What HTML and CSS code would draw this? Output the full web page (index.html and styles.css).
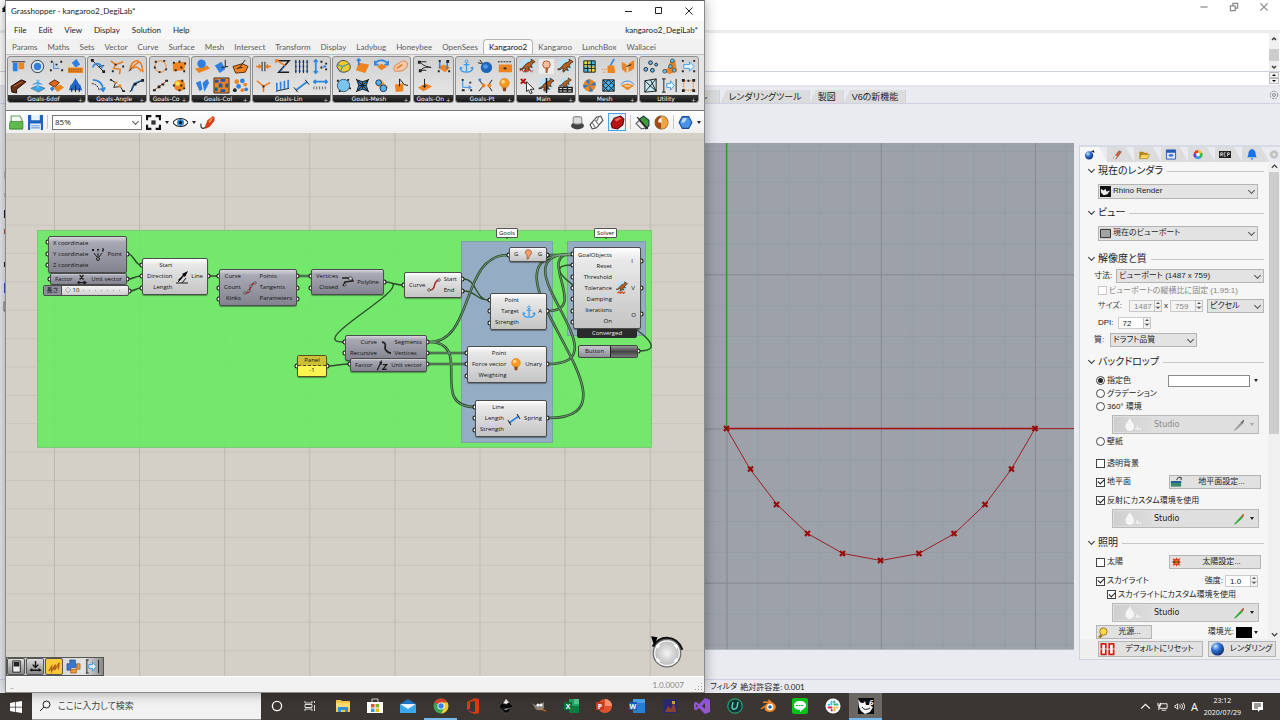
FILE: index.html
```
<!DOCTYPE html>
<html lang="ja">
<head>
  <meta charset="UTF-8" />
  <meta name="viewport" content="width=device-width, initial-scale=1.0" />
  <title>Grasshopper - kangaroo2_DegiLab*</title>
  <link rel="stylesheet" href="styles.css">
</head>
<body>

  <!-- shared shapes -->
  <svg class="defs" aria-hidden="true">
    <defs>
      <radialGradient id="ball" cx=".35" cy=".3" r=".8"><stop offset="0" stop-color="#cfe6ff"/><stop offset=".4" stop-color="#2f74d8"/><stop offset="1" stop-color="#0b1f5c"/></radialGradient>
      <radialGradient id="knob"><stop offset="0" stop-color="#f4f4f4"/><stop offset="1" stop-color="#b5b5b5"/></radialGradient>
      <pattern id="ghGrid" x="54" y="253" width="85.1" height="28.37" patternUnits="userSpaceOnUse"><path d="M0 .5H86" stroke="#c8c4bb" stroke-width="1"/><path d="M.5 0V29" stroke="#bdb9af" stroke-width="1"/></pattern>
      <pattern id="rhMinor" x="726.5" y="428.5" width="30.85" height="30.85" patternUnits="userSpaceOnUse"><path d="M0 .5H31M.5 0V31" stroke="#969ca4"/></pattern>
      <pattern id="rhMajor" x="726.5" y="428.5" width="154.25" height="154.25" patternUnits="userSpaceOnUse"><path d="M0 .5H155M.5 0V155" stroke="#858a93"/></pattern>
      <symbol id="roo" viewBox="0 0 18 18"><circle cx="9" cy="8" r="7.500" fill="#b9e2f6"/><path d="M1 11.500C4 12 5 8 8 6c2-1.500 4-1 5-3V1l1.500 1.500L17 4l-2.500 1.500L13 8l1 2-2-.5-2 .5 2 3-3-.5L7 15l-1-1 1-3c-2-1-3 2-6 1.500z" fill="#b55f20" stroke="#2e1a0c" stroke-width=".8"/></symbol>
      <symbol id="bulb" viewBox="0 0 12 16"><circle cx="6" cy="5.500" r="5" fill="#f79a1e" stroke="#c46a08" stroke-width=".5"/><circle cx="4.500" cy="4" r="2" fill="#ffd38a"/><path d="M4 10h4l-.5 4h-3z" fill="#8c4a1c"/></symbol>
      <symbol id="anchor" viewBox="0 0 16 16"><path d="M8 4v10M5 6h6M1.500 9c0 4 4 5 6.500 5s6.500-1 6.500-5M1 11l.7-2 2 1M15 11l-.7-2-2 1" fill="none" stroke="#3d9be6" stroke-width="1.300"/><circle cx="8" cy="2.600" r="1.500" fill="none" stroke="#3d9be6"/></symbol>
      <symbol id="drops" viewBox="0 0 20 14"><path d="M7 1c2 4 4 5 4 8a4 4 0 0 1-8 0c0-3 2-4 4-8z" fill="#f5f5f5"/><path d="M14 8l2 4h-4zM17 9l1 3h-2z" fill="#efefef"/></symbol>
      <symbol id="pen" viewBox="0 0 14 14"><path d="M2 12L9 4l2 2-8 7-2 .5z"/><path d="M9 4l3-3 1 1-2 4z" fill="#b5562a"/></symbol>
    </defs>
  </svg>

  <main class="desktop">

    <!-- Rhino, behind -->
    <section class="rhino">
      <header class="rh-title">
        <svg class="rh-mark" viewBox="0 0 6 12"><path d="M6 2v9H2l1-2-1-1 2-2z" fill="#111"/></svg>
        <button aria-label="Minimize"><svg viewBox="0 0 10 10"><path d="M2 5h6"/></svg></button>
        <button aria-label="Restore"><svg viewBox="0 0 10 10"><path d="M2 4h4v4H2zM4 4V2h4v4H6"/></svg></button>
        <button aria-label="Close"><svg viewBox="0 0 10 10"><path d="M2 2l6 6M8 2L2 8"/></svg></button>
      </header>
      <div class="rh-history">
        <div class="mini-scroll"><svg viewBox="0 0 10 38"><path d="M3 7l2-2 2 2M3 33l2 2 2-2" class="ln"/><path d="M0 16h10v12H0z" fill="#cdcdcd"/></svg></div>
      </div>
      <div class="rh-command">
        <input type="text" aria-label="Command">
        <svg viewBox="0 0 10 13"><path d="M.5.5h9v5h-9zM.5 6.500h9v5h-9z" fill="#f4f4f4" stroke="#bbb"/><path d="M3 4l2-2 2 2zM3 8l2 2 2-2z"/></svg>
      </div>
      <nav class="rh-tabs">
        <button class="cut">ル</button>
        <button>レンダリングツール</button>
        <button>製図</button>
        <button>V6の新機能</button>
        <svg class="gear" viewBox="0 0 10 10"><circle cx="5" cy="5" r="3.800" fill="none" stroke="#888" stroke-dasharray="2 1"/><circle cx="5" cy="5" r="1.500" fill="none" stroke="#888"/></svg>
      </nav>
      <div class="rh-tools"></div>

      <div class="rh-body">
        <svg class="rh-side" viewBox="0 0 6 180"><path d="M5 28v8M5 50v4" stroke="#999"/><path d="M4 67h2v8H4zM4 119h2v5H4z" fill="#223"/><path d="M4 86h2v5H4z" fill="#c05a20"/><path d="M4 140h2v10H4z" fill="#2a5ac0"/><path d="M6 159H4v9h2" fill="none" stroke="#666"/></svg>
        <div class="viewport">
          <svg width="100%" height="100%">
            <g transform="translate(-6 -143)">
              <rect y="143" width="1080" height="510" fill="url(#rhMinor)"/>
              <rect y="143" width="1080" height="510" fill="url(#rhMajor)"/>
              <path d="M726.500 143V428" stroke="#2c9a2f" stroke-width="1.300"/>
              <path d="M1035 428.500h40" stroke="#9c2a2e"/>
              <path d="M726 428.500H1035" stroke="#a80d10" stroke-width="1.400"/>
              <path d="M726.500 428.500L750 469l27 35.500 30.500 29 35.500 20 38 7 38-7 35.500-20L985 504.500 1011.500 469l23.500-40.500" fill="none" stroke="#9c1f22"/>
              <path class="knots" d="M724 426l5 5m0-5l-5 5M748 466.500l5 5m0-5l-5 5M774 502l5 5m0-5l-5 5M805 531l5 5m0-5l-5 5M840 551l5 5m0-5l-5 5M878 558l5 5m0-5l-5 5M916.500 551l5 5m0-5l-5 5M951.500 531l5 5m0-5l-5 5M982.500 502l5 5m0-5l-5 5M1009 466.500l5 5m0-5l-5 5M1032.500 426l5 5m0-5l-5 5"/>
            </g>
          </svg>
        </div>

        <aside class="panel">
          <nav class="panel-tabs">
            <button class="on" aria-label="レンダリング"><svg viewBox="0 0 12 12"><circle cx="5" cy="7" r="4.500" fill="url(#ball)"/><path d="M7 3l3-2 1 3z" fill="#222"/></svg></button>
            <button aria-label="マテリアル"><svg viewBox="0 0 12 12"><path d="M2 10l6-8 3 1-6 8z" fill="#d9542b" stroke="#777" stroke-width=".7"/><path d="M2 10l2-3 2 1-2 3z" fill="#eee"/></svg></button>
            <button aria-label="ライブラリ"><svg viewBox="0 0 12 12"><path d="M1 3h4l1 1h4v2H4l-2 4H1z" fill="#b98210"/><path d="M3 6h9l-2 4.500H1z" fill="#ffd452" stroke="#7a5a10" stroke-width=".5"/></svg></button>
            <button aria-label="プロパティ"><svg viewBox="0 0 12 12"><path d="M1 1h10v10H1z" fill="#dfe8f8" stroke="#2457b8"/><path d="M1 1h10v3H1z" fill="#2457b8"/><path d="M3 7c2-2 4-2 6 0-2 2-4 2-6 0z" fill="#3a74d8"/></svg></button>
            <button aria-label="色"><svg viewBox="0 0 12 12"><path d="M6 6V1a5 5 0 0 1 4.500 3z" fill="#f2c21a"/><path d="M6 6l4.500-2A5 5 0 0 1 9 10z" fill="#36b548"/><path d="M6 6l3 4a5 5 0 0 1-6 0z" fill="#2aa6e8"/><path d="M6 6l-3 4a5 5 0 0 1-1.500-6z" fill="#6a3fd0"/><path d="M6 6L1.500 4A5 5 0 0 1 6 1z" fill="#e5352b"/><circle cx="6" cy="6" r="2" fill="#fff"/></svg></button>
            <button aria-label="RCP"><svg viewBox="0 0 14 12"><path d="M0 2h14v8H0z" fill="#222"/><path d="M2 8V4h2v2H2m2 2L3 6M8 4H6v4h2M10 8V4h2v2h-2" fill="none" stroke="#fff" stroke-width=".8"/></svg></button>
            <button aria-label="通知"><svg viewBox="0 0 12 12"><path d="M6 0c3 1 4 3 4 6l1 3H1l1-3c0-3 1-5 4-6z" fill="#1672e8"/><path d="M4.500 10h3L6 12z" fill="#1672e8"/></svg></button>
            <svg class="gear" viewBox="0 0 12 12"><circle cx="6" cy="6" r="4.500" fill="#c4c4c4" stroke="#b8b8b8" stroke-dasharray="2 1"/><circle cx="6" cy="6" r="1.600" fill="#eee"/></svg>
          </nav>

          <div class="panel-scroll">
            <form class="props">
              <h3>現在のレンダラ</h3>
              <div class="row in1">
                <span class="pick wide"><svg viewBox="0 0 12 12"><path d="M0 0h12v12H0z" fill="#111"/><path d="M1 3l3 2 2-2 1 3 4-1-3 4-4 1-3-3z" fill="#eee"/></svg><select class="icon-pad" aria-label="レンダラ"><option>Rhino Render</option></select></span>
              </div>
              <h3 class="up">ビュー</h3>
              <div class="row in1">
                <span class="pick wide"><svg viewBox="0 0 12 12"><path d="M.5 1.500h11v9H.5z" fill="#a3a3a3" stroke="#222"/></svg><select class="icon-pad" aria-label="ビュー"><option>現在のビューポート</option></select></span>
              </div>
              <h3 class="up2">解像度と質</h3>
              <div class="row in0"><label for="dim">寸法:</label><span class="pick grow"><select id="dim"><option>ビューポート (1487 x 759)</option></select></span></div>
              <div class="row in1 short"><input type="checkbox" id="lock" disabled><label for="lock" class="dim">ビューポートの縦横比に固定 (1.95:1)</label></div>
              <div class="row in1 gap"><label for="w" class="dim2">サイズ:</label><input id="w" class="num off" value="1487" disabled><i class="spin"></i><span>x</span><input class="num off" aria-label="高さ" value="759" disabled><i class="spin"></i><span class="pick grow"><select aria-label="単位"><option>ピクセル</option></select></span></div>
              <div class="row in1 gap"><label for="dpi">DPI:</label><input id="dpi" class="num dpi" value="72"><i class="spin"></i></div>
              <div class="row in0 gap"><label for="q">質:</label><span class="pick mid"><select id="q"><option>ドラフト品質</option></select></span></div>

              <h3 class="up">バックドロップ</h3>
              <div class="row short"><input type="radio" name="bg" id="b1" checked><label for="b1">指定色</label><button type="button" class="swatch" aria-label="色"></button><i class="tri"></i></div>
              <div class="row short"><input type="radio" name="bg" id="b2"><label for="b2">グラデーション</label></div>
              <div class="row short"><input type="radio" name="bg" id="b3"><label for="b3">360° 環境</label></div>
              <button type="button" class="studio" disabled><svg class="dr"><use href="#drops"/></svg>Studio<svg class="pn"><use href="#pen"/></svg><i class="tri"></i></button>
              <div class="row short gap"><input type="radio" name="bg" id="b4"><label for="b4">壁紙</label></div>
              <div class="row short far"><input type="checkbox" id="c1"><label for="c1">透明背景</label></div>
              <div class="row mid-row"><input type="checkbox" id="c2" checked><label for="c2">地平面</label><button type="button" class="set"><svg viewBox="0 0 14 12"><path d="M1 5h11v6H1z" fill="#3d8a6a"/><path d="M1 5h11v2H1z" fill="#1f5fa0"/><path d="M7 4l2-3h3v3" fill="none" stroke="#222"/></svg><span>地平面設定...</span></button></div>
              <div class="row short"><input type="checkbox" id="c3" checked><label for="c3">反射にカスタム環境を使用</label></div>
              <button type="button" class="studio"><svg class="dr"><use href="#drops"/></svg>Studio<svg class="pn"><use href="#pen"/></svg><i class="tri"></i></button>

              <h3 class="up3">照明</h3>
              <div class="row mid-row flush"><input type="checkbox" id="c4"><label for="c4">太陽</label><button type="button" class="set"><svg viewBox="0 0 14 12"><path d="M7 1l1 2 3-1-1 3 2 1-2 1 1 3-3-1-1 2-1-2-3 1 1-3-2-1 2-1-1-3 3 1z" fill="#d93a16"/><circle cx="7" cy="6" r="2" fill="#f4a020"/><path d="M3 6h7" stroke="#222"/></svg><span>太陽設定...</span></button></div>
              <div class="row mid-row tight"><input type="checkbox" id="c5" checked><label for="c5">スカイライト</label><label for="st" class="push">強度:</label><input id="st" class="num" value="1.0"><i class="spin wide-end"></i></div>
              <div class="row short in2"><input type="checkbox" id="c6" checked><label for="c6">スカイライトにカスタム環境を使用</label></div>
              <button type="button" class="studio"><svg class="dr"><use href="#drops"/></svg>Studio<svg class="pn"><use href="#pen"/></svg><i class="tri"></i></button>
              <div class="row mid-row flush"><button type="button" class="light"><svg viewBox="0 0 12 12"><circle cx="7" cy="5" r="4" fill="#ffd94a" stroke="#9a7210"/><path d="M1 11l3-3 2 2-2 2z" fill="#9a7210"/></svg><span>光源...</span></button><span class="push">環境光:</span><button type="button" class="black" aria-label="環境光"></button><i class="tri"></i></div>
            </form>
            <div class="scrollbar"><svg viewBox="0 0 10 10"><path d="M2 6l3-3 3 3" class="ln"/></svg><i></i><svg viewBox="0 0 10 10"><path d="M2 4l3 3 3-3" class="ln"/></svg></div>
          </div>

          <footer class="panel-foot">
            <button class="reset"><svg viewBox="0 0 18 16"><path d="M2 2h5v12H2zM11 2h5v12h-5z" fill="#fff" stroke="#d81e12" stroke-width="2"/><path d="M0 8h9M9 8h9" stroke="#e1e1e1"/></svg><span>デフォルトにリセット</span></button>
            <button class="render"><svg viewBox="0 0 16 16"><circle cx="8" cy="8" r="7.500" fill="url(#ball)"/></svg><span>レンダリング</span></button>
          </footer>
        </aside>
      </div>

      <div class="rh-gap"></div>
      <footer class="rh-status"><span>フィルタ</span><span>絶対許容差: 0.001</span></footer>
    </section>

    <!-- Grasshopper window -->
    <section class="gh">
      <header class="gh-title">
        <span>Grasshopper - kangaroo2_DegiLab*</span>
        <button aria-label="Minimize"><svg viewBox="0 0 10 10"><path d="M1 5.500h7"/></svg></button>
        <button aria-label="Maximize"><svg viewBox="0 0 10 10"><path d="M1.500 1.500h6v6h-6z"/></svg></button>
        <button aria-label="Close"><svg viewBox="0 0 10 10"><path d="M1.500 1.500l7 7M8.500 1.500l-7 7"/></svg></button>
      </header>
      <nav class="gh-menu">
        <a href="#">File</a><a href="#">Edit</a><a href="#">View</a><a href="#">Display</a><a href="#">Solution</a><a href="#">Help</a>
        <span>kangaroo2_DegiLab*</span>
      </nav>
      <nav class="gh-tabs">
        <button>Params</button><button>Maths</button><button>Sets</button><button>Vector</button><button>Curve</button><button>Surface</button><button>Mesh</button><button>Intersect</button><button>Transform</button><button>Display</button><button>Ladybug</button><button>Honeybee</button><button>OpenSees</button><button class="on">Kangaroo2</button><button>Kangaroo</button><button>LunchBox</button><button>Wallacei</button>
      </nav>

      <div class="ribbon">
        <div class="grp c4"><div class="icons">
          <svg viewBox="0 0 18 18"><path class="k" d="M2 4h14"/><path class="b" d="M3 5h5v9H3z"/><path class="o" d="M9 5h6v7H9z"/></svg>
          <svg viewBox="0 0 18 18"><circle cx="9" cy="9" r="6.500" fill="#dfe9f5" stroke="#234"/><circle class="b" cx="9" cy="9" r="4"/></svg>
          <svg viewBox="0 0 18 18"><path class="d" d="M3 3h2v2H3zM2 12h2v2H2zM13 3h2v2h-2zM14 12h2v2h-2zM8 6h2v2H8z"/><path class="bs" d="M6 5v6h6"/></svg>
          <svg viewBox="0 0 18 18"><path class="b" d="M5 5l5-4 4 6-5 3z"/><path class="o" d="M1 10h16v6H1z"/><path d="M2 12h14M2 14h14" stroke="#8a4a12" stroke-dasharray="1 1"/></svg>
          <svg viewBox="0 0 18 18"><path d="M1 10l11-7 5 2-10 8v4l-5-1z" fill="#6b2f12" stroke="#1d0d05"/><path d="M4 10l9-5" stroke="#c06a38"/></svg>
          <svg viewBox="0 0 18 18"><path d="M2 12l7-3 8 3-7 4z" fill="#3fa6e8" stroke="#246" stroke-width=".5"/><path d="M8 3h3v8H8z" fill="#6cc3f2"/><path class="bs" d="M4 8l5-2 5 2"/></svg>
          <svg viewBox="0 0 18 18"><path d="M1 7l6-4 5 3-5 5z" fill="#d9651a" stroke="#5b2a08"/><path class="o" d="M6 11l7-3 4 3-7 5z"/><path class="b" d="M2 12l3-2 2 3-3 2z"/></svg>
          <svg viewBox="0 0 18 18"><path d="M9 1l4 7H5zM4 8h10l2 6H2z" fill="#1f66c8"/><path class="k" d="M5 16v-4M9 16V9M13 16v-4"/></svg>
        </div><b>Goals-6dof</b></div>
        <div class="grp c3"><div class="icons">
          <svg viewBox="0 0 18 18"><path class="k" d="M2 2l7 7 6 6M9 9l6-1"/><path class="bs2" d="M3 10c2-6 8-5 10 1"/><path class="d" d="M1 1h3v3H1zM13 13h3v3h-3z"/></svg>
          <svg viewBox="0 0 18 18"><path class="os2" d="M2 3l5 4 8-3M7 7l-2 4 7 1-1 5"/><path class="d" d="M6 6h2v2H6zM14 8h2v2h-2zM3 13h2v2H3z"/></svg>
          <svg viewBox="0 0 18 18"><path class="os2" d="M2 13C3 5 8 1 12 4s2 6 4 11M2 13c3-5 7-7 10-9M5 11c4-3 6-1 9 3"/><path class="k" d="M1 14l3-3"/></svg>
          <svg viewBox="0 0 18 18"><path class="bs2" d="M3 3c6 0 10 4 11 10M11 12l3 3 2-4"/><path class="k" d="M2 7c4 0 7 3 8 8" stroke-dasharray="2 1"/></svg>
          <svg viewBox="0 0 18 18"><path class="k" d="M2 3l5 3-2 5 7-1 3 5"/><path class="o" d="M6 5h3v2H6zM10 8h3v3h-3z"/><path class="d" d="M1 2h2v2H1zM14 14h3v2h-3z"/></svg>
          <svg viewBox="0 0 18 18"><path class="bs2" d="M4 15C4 9 8 5 15 4"/><path class="k" d="M2 16l5-8 9-5"/><path class="d" d="M6 6h3v3H6zM14 2h3v3h-3z"/></svg>
        </div><b>Goals-Angle</b></div>
        <div class="grp c2"><div class="icons">
          <svg viewBox="0 0 18 18"><circle cx="9" cy="9" r="6" fill="none" stroke="#e88030"/><path class="d" d="M3 3h2v2H3zM12 2h2v2h-2zM14 11h2v2h-2zM7 14h2v2H7zM2 9h2v2H2z"/></svg>
          <svg viewBox="0 0 18 18"><path class="o" d="M2 5l14-1-2 9-12 1z"/><path class="d" d="M2 4h2v2H2zM8 3h2v2H8zM14 5h2v2h-2zM4 12h2v2H4zM10 9h2v2h-2zM13 13h2v2h-2z"/></svg>
          <svg viewBox="0 0 18 18"><path d="M2 14L16 4" stroke="#c0522a"/><path class="d" d="M1 13h3v2H1zM6 9h3v3H6zM10 7h3v2h-3zM14 3h3v2h-3z"/></svg>
          <svg viewBox="0 0 18 18"><circle class="o" cx="9" cy="9" r="6"/><circle cx="7" cy="7" r="2.500" fill="#ffe04a"/><path class="d" d="M2 8h2v2H2zM11 3h2v2h-2zM13 11h2v2h-2zM8 13h2v2H8zM10 8h2v2h-2z"/></svg>
        </div><b>Goals-Co</b></div>
        <div class="grp c3"><div class="icons">
          <svg viewBox="0 0 18 18"><path class="o" d="M1 11l13-3 3 3-12 5z"/><circle class="b" cx="8" cy="6" r="4.500"/></svg>
          <svg viewBox="0 0 18 18"><path class="b" d="M2 8l7-4 4 8-6 4z"/><path class="k" d="M9 10l7-1M13 2v8"/></svg>
          <svg viewBox="0 0 18 18"><path class="o" d="M1 9l10-3 6 3-3 6-10 1z" stroke="#5a2706"/><path class="k" d="M8 10l6-8M5 11l6-1"/></svg>
          <svg viewBox="0 0 18 18"><path class="b" d="M2 6l5-2 2 9-3 2zM9 6l5-4 2 4-5 10z"/></svg>
          <svg viewBox="0 0 18 18"><path class="o" d="M1 1h16v16H1z"/><path d="M2 3h4v3H2zM8 2h5v3H8zM13 7h3v4h-3zM6 7h4v4H6zM2 11h3v4H2zM8 13h5v3H8z" fill="#2355a8"/><path d="M1 1h16v16H1z" fill="none" stroke="#333"/></svg>
          <svg viewBox="0 0 18 18"><circle class="o" cx="5" cy="5" r="2.500"/><circle class="b" cx="11" cy="4" r="2.500"/><circle class="b" cx="7" cy="10" r="2.500"/><circle class="o" cx="14" cy="8" r="2"/><circle class="d" cx="3" cy="14" r="2"/><circle class="o" cx="11" cy="14" r="2"/><circle class="b" cx="15" cy="13" r="2"/></svg>
        </div><b>Goals-Col</b></div>
        <div class="grp c4"><div class="icons">
          <svg viewBox="0 0 18 18"><path class="os2" d="M1 9h4M17 9h-4M4 7l2 2-2 2M14 7l-2 2 2 2"/><path class="k" d="M7.500 4v10M10.500 4v10"/></svg>
          <svg viewBox="0 0 18 18"><path class="k thick" d="M4 3h12L5 15h11"/><path class="os2" d="M2 2l10 6M2 5V2h3"/><path class="bs" d="M12 8l-6 7"/></svg>
          <svg viewBox="0 0 18 18"><path class="bs2" d="M2 4h14M2 9h14M2 14h14" stroke-dasharray="2 2"/><path class="k" d="M3 2v14M7 2v14M11 2v14M15 2v14"/></svg>
          <svg viewBox="0 0 18 18"><path class="bs2" d="M4 2v14M2 4l2-2 2 2M2 14l2 2 2-2"/><path class="d" d="M9 3h2v2H9zM14 5h2v2h-2zM9 9h2v2H9zM14 11h2v2h-2z"/><path class="b" d="M12 8h3v2h-3z"/></svg>
          <svg viewBox="0 0 18 18"><path class="os2" d="M2 4l7 6 7-4M9 10v6"/><path class="d" d="M8 9h2v2H8z"/></svg>
          <svg viewBox="0 0 18 18"><path class="k" d="M2 15l14-3"/><path class="bs2" d="M3 15V6M7 14V5M11 13V4M15 12V3"/></svg>
          <svg viewBox="0 0 18 18"><path class="bs2" d="M3 14L15 5"/><path class="k" d="M1 11l4 5M13 3l4 5"/></svg>
          <svg viewBox="0 0 18 18"><path class="bs2" d="M2 5h14M4 3L2 5l2 2M14 3l2 2-2 2"/><path d="M1 10h16v5H1z" fill="#ddd"/><path d="M2 10v3M5 10v3M8 10v3M11 10v3M14 10v3" stroke="#666"/></svg>
        </div><b>Goals-Lin</b></div>
        <div class="grp c4"><div class="icons">
          <svg viewBox="0 0 18 18"><path d="M2 9c1-6 6-7 9-6s6 4 5 8-8 5-11 3z" fill="#f3c92c" stroke="#345"/><path d="M3 7l5 2 7-3M8 9l-2 5" stroke="#1a86b8" fill="none"/></svg>
          <svg viewBox="0 0 18 18"><path class="o" d="M2 13l3-8 11 2-4 9z"/><path class="bs2" d="M5 8V1M3 3l2-2 2 2"/></svg>
          <svg viewBox="0 0 18 18"><path class="bs2" d="M2 7c2-6 11-6 14 0M16 3v4h-4M2 3v4h4"/><path class="o" d="M4 9l5-3 6 3-6 4z"/></svg>
          <svg viewBox="0 0 18 18"><path d="M2 11c1-5 4-4 6-6s6-3 8 0-2 9-8 9-6 0-6-3z" fill="#f6c8a8" stroke="#d8824a"/><path class="os2" d="M5 11l6-4"/></svg>
          <svg viewBox="0 0 18 18"><circle cx="9" cy="9" r="6.500" fill="#7cc5ee" stroke="#357"/><path class="d" d="M2 3h2v2H2zM13 2h2v2h-2zM15 11h2v2h-2zM4 14h2v2H4z"/></svg>
          <svg viewBox="0 0 18 18"><path d="M3 3l6 2 6-2-2 6 2 6-6-2-6 2 2-6z" fill="#2f80c8"/><path class="k" d="M2 2l14 14M16 2L2 16M3 3l6 2 6-2-2 6 2 6-6-2-6 2 2-6zM9 5v8M5 9h8"/></svg>
          <svg viewBox="0 0 18 18"><path d="M2 6l6-4 8 9-5 5z" fill="#f39a3a"/><circle cx="6" cy="6" r="3" fill="#52b4e8" stroke="#236"/><circle cx="11" cy="12" r="3.500" fill="#52b4e8" stroke="#236"/></svg>
          <svg viewBox="0 0 18 18"><path class="o" d="M3 8l9-1v8l-8 1z"/><path class="k" d="M8 10V2l5 6 4 1"/></svg>
        </div><b>Goals-Mesh</b></div>
        <div class="grp c2"><div class="icons">
          <svg viewBox="0 0 18 18"><path class="k" d="M4 4c4 5 8 5 12 6M4 4h7M5 13c3-4 7-3 11-3M5 13h6"/><path class="d" d="M2 3h3v3H2zM3 12h3v3H3z"/></svg>
          <svg viewBox="0 0 18 18"><path class="o" d="M3 10l6-3 7 3-5 5z"/><path class="bs2" d="M5 11V3M13 12V4"/><path class="d" d="M4 2h2v2H4zM12 2h3v3h-3zM3 13h2v2H3zM14 13h2v2h-2z"/></svg>
          <svg viewBox="0 0 18 18"><path class="o" d="M2 11l9-4 6 3-9 5z"/><path class="k" d="M9 2v9M7 9l2 2 2-2"/></svg>
        </div><b>Goals-On</b></div>
        <div class="grp c3"><div class="icons">
          <svg viewBox="-1 -1 18 18"><use href="#anchor" width="16" height="16"/></svg>
          <svg viewBox="0 0 18 18"><circle cx="10" cy="10" r="6" fill="#1f66b8"/><circle cx="9" cy="9" r="2.500" fill="#4f9ae8"/><path class="k" d="M3 2l3 4M1 5l4 1"/></svg>
          <svg viewBox="0 0 18 18"><path class="o" d="M3 7h14v8H3z"/><path class="k" d="M2 4h14" stroke-dasharray="2 1"/><path class="d" d="M8 10h3v2H8z"/></svg>
          <svg viewBox="0 0 18 18"><path class="bs" d="M5 3v8h8M11 9l3 2-3 2"/><path class="d" d="M4 2h2v2H4zM12 5h2v2h-2zM4 13h3v2H4zM13 13h2v2h-2z"/></svg>
          <svg viewBox="0 0 18 18"><path class="k" d="M2 3l5 6-5 6M16 3l-4 6 4 6"/><circle class="o" cx="7" cy="9" r="2"/><circle class="o" cx="13" cy="9" r="2"/><circle class="b" cx="3" cy="3" r="1.500"/></svg>
          <svg viewBox="-3 -1 18 18"><use href="#bulb" width="12" height="16"/></svg>
        </div><b>Goals-Pt</b></div>
        <div class="grp c3"><div class="icons">
          <svg viewBox="0 0 18 18"><use href="#roo" width="18" height="18"/><path d="M1 14l2-2 2 3 2-3 2 3 2-3 2 3 2-2" fill="none" stroke="#d03018"/></svg>
          <svg viewBox="0 0 18 18"><path d="M1 1h16v16H1z" fill="#ececec"/><circle cx="9" cy="7" r="4" fill="#f4c0a0" stroke="#a85a30"/><path d="M8 10h3l-1 6H8z" fill="#b06030"/></svg>
          <svg viewBox="0 0 18 18"><use href="#roo" width="18" height="18"/></svg>
          <svg viewBox="0 0 18 18"><path d="M2 2l5 5M7 2L2 7" stroke="#b01010" stroke-width="2.200"/><path d="M8 5l8 8h-4l2 4-2 .5-2-4-2 2z" fill="#fff" stroke="#222"/></svg>
          <svg viewBox="0 0 18 18"><use href="#roo" width="18" height="18"/><path d="M9 1v16" stroke="#111" stroke-width="1.500"/></svg>
          <svg viewBox="0 0 18 18"><use href="#roo" width="18" height="14"/><path d="M2 11h14v5H2zM2 13.500h14M6 11v5M11 11v5" fill="none" stroke="#222" stroke-width="1.500"/></svg>
        </div><b>Main</b></div>
        <div class="grp c3"><div class="icons">
          <svg viewBox="0 0 18 18"><path d="M3 3h12v12H3z" fill="#f5dc4a"/><path d="M3 9h6V3h6v6H9v6H3z" fill="#4bb8e0"/><path class="k" d="M3 3h12v12H3zM7 3v12M11 3v12M3 7h12M3 11h12"/></svg>
          <svg viewBox="0 0 18 18"><path class="bs2" d="M15 1l-4 7"/><path class="o" d="M8 8h7l1 8H8z"/><path class="os" d="M2 12h5M3 15h4" stroke-dasharray="1 1"/></svg>
          <svg viewBox="0 0 18 18"><path class="o" d="M3 4l5 3v9l-5-4zM10 6l6-4v9l-6 4z"/><path class="k" d="M8 9l5-2"/></svg>
          <svg viewBox="0 0 18 18"><circle class="o" cx="9" cy="9" r="6.500"/><path d="M9 9L5 4l4-2zM9 9l6-4 1 4zM9 9l4 6-4 1zM9 9l-6 3-1-4z" fill="#3a78b8"/></svg>
          <svg viewBox="0 0 18 18"><path d="M3 3h12v12H3z" fill="#4bb0e8"/><path class="k" d="M3 3h12v12H3zM3 3l12 12M15 3L3 15M9 3l6 6-6 6-6-6z"/></svg>
          <svg viewBox="0 0 18 18"><path class="bs" d="M2 8c4-5 10-5 14 0"/><path class="o" d="M2 9l7-2 7 2-7 5z"/><path d="M6 9h6v1H6z" fill="#fff"/></svg>
        </div><b>Mesh</b></div>
        <div class="grp c3"><div class="icons">
          <svg viewBox="0 0 18 18"><g fill="#5cc0e8" stroke="#223"><circle cx="4" cy="12" r="2"/><circle cx="9" cy="5" r="2"/><circle cx="11" cy="13" r="2"/><circle cx="15" cy="7" r="1.500"/></g></svg>
          <svg viewBox="0 0 18 18"><path class="o" d="M1 13l6-2 3-8 5-1 2 12-8 3z"/><g fill="#5cc0e8" stroke="#223" stroke-width=".6"><circle cx="12" cy="3" r="2"/><circle cx="10" cy="9" r="2"/><circle cx="4" cy="14" r="2"/><circle cx="14" cy="13" r="2"/></g></svg>
          <svg viewBox="0 0 18 18"><path d="M4 7h6V4l5 5-5 5v-3H4z" fill="#eef7fd" stroke="#3a9be0"/><path class="d" d="M2 2h2v2H2zM14 2h2v2h-2zM2 13h2v2H2zM14 13h2v2h-2z"/></svg>
          <svg viewBox="0 0 18 18"><path d="M3 4l12-2v13L3 16z" fill="#c5e8f5"/><path class="k" d="M3 4l12-2v13L3 16zM3 4l12 11M15 2L3 16M9 3l6 12"/></svg>
          <svg viewBox="0 0 18 18"><path d="M6 7h4V4l4 5-4 5v-3H6z" fill="#eef7fd" stroke="#3a9be0"/><path class="k" d="M3 2v14M1 2h4M1 16h4M16 2v14"/></svg>
          <svg viewBox="0 0 18 18"><path class="os" d="M4 4h10v10H4z" stroke-dasharray="2 1"/><path class="d" d="M2 2h3v3H2zM13 2h3v3h-3zM2 13h3v3H2zM13 13h3v3h-3zM8 3h2v2H8z"/></svg>
        </div><b>Utility</b></div>
      </div>

      <div class="gh-tools">
        <button aria-label="Open"><svg viewBox="0 0 14 14"><path d="M2 1h8l2 3v9H2z" fill="#f4f8f2" stroke="#6a9a6a"/><path d="M1 6h12v7H0z" fill="#5fba4a" stroke="#2f7a2a" stroke-width=".6"/></svg></button>
        <button aria-label="Save"><svg viewBox="0 0 14 14"><path d="M0 0h14v14H0z" fill="#1d64c0"/><path d="M3 0h8v5H3zM2 8h10v6H2z" fill="#eaf2fb"/><path d="M3 10h8M3 12h8" stroke="#6a9ad8"/></svg></button>
        <i class="sep"></i>
        <span class="pick zoom"><select aria-label="Zoom"><option>85%</option></select></span>
        <button aria-label="Zoom extents"><svg viewBox="0 0 14 14"><path d="M1 5V1h4M9 1h4v4M13 9v4H9M5 13H1V9" fill="none" stroke="#111" stroke-width="2"/><path d="M5 5h4v4H5z" fill="#333"/></svg></button><i class="tri"></i>
        <button aria-label="Preview"><svg viewBox="0 0 14 14"><path d="M0 7c3-5 11-5 14 0-3 5-11 5-14 0z" fill="#fff" stroke="#222"/><circle cx="7" cy="7" r="3.300" fill="#2f86d0"/><circle cx="7" cy="7" r="1.400"/></svg></button><i class="tri"></i>
        <button aria-label="Sketch"><svg viewBox="0 0 14 14"><path d="M1 8c-1 5 3 6 5 2" fill="none" stroke="#222"/><path d="M5 10l2-5 5-4c2 1 2 3 1 5l-4 5-4 2z" fill="#d83a1a"/><path d="M8 6l3-4 1 1-3 5z" fill="#ff9a4a"/></svg></button>
        <span class="fill"></span>
        <button aria-label="No preview"><svg viewBox="0 0 14 14"><ellipse cx="7" cy="10" rx="6" ry="3.500" fill="#444"/><path d="M3 3c0-2 8-2 8 0v4c0 2-8 2-8 0z" fill="#ddd" stroke="#888"/></svg></button>
        <button aria-label="Wireframe"><svg viewBox="0 0 14 14"><path d="M1 9l6-7 4-1 2 4-6 7-4 1z" fill="#fafafa" stroke="#444"/><path d="M5 4l4 5M3 7l3 5M9 2L7 6" stroke="#777" fill="none"/></svg></button>
        <button aria-label="Shaded" class="on"><svg viewBox="0 0 14 14"><path d="M1 8l3-5 6-2 3 3-1 5-5 4-5-1z" fill="#b81414" stroke="#5e0808"/><path d="M4 4l5-2 2 1-5 3z" fill="#f06a5a"/></svg></button>
        <i class="sep"></i>
        <button aria-label="Selected only"><svg viewBox="0 0 14 14"><path d="M4 4l4-3 5 4v5l-3 3z" fill="#3f9a3a" stroke="#234"/><path d="M1 8l3-3 6 7-4 1z" fill="#eee" stroke="#555"/><path class="k" d="M2 2l10 11"/></svg></button>
        <button aria-label="Preview settings"><svg viewBox="0 0 14 14"><circle cx="7" cy="7" r="6" fill="#f2f2f2" stroke="#7a4a18"/><path d="M7 1a6 6 0 0 0 0 12z" fill="#a34a14"/><path d="M7 1a6 6 0 0 1 0 12z" fill="#f5a63a"/><path d="M4 7h3V2a5 5 0 0 0-3 5z" fill="#fff"/></svg></button>
        <i class="sep"></i>
        <button aria-label="Mesh quality"><svg viewBox="0 0 14 14"><path d="M4 1.500h6L13 7l-3 5.500H4L1 7z" fill="#4a92e4" stroke="#1a4a98"/><path d="M4.500 3h4L6 7H3z" fill="#b8dcff"/></svg></button><i class="tri"></i>
      </div>

      <div class="canvas">
        <svg class="wires" width="100%" height="100%">
          <g transform="translate(-6 -133)">
            <rect x="6" y="133" width="1200" height="900" fill="url(#ghGrid)"/>
            <rect x="37.500" y="230.500" width="614" height="217" class="g-green"/>
            <rect x="461.500" y="241.500" width="91" height="201" class="g-blue"/>
            <rect x="567.500" y="241.500" width="78" height="94" class="g-blue"/>
            <g class="wire">
              <path d="M128 254c6 0 7 11 13 11M128 279c6 0 7-3 13-3M130 291c5 0 6-3 11-3M210 276h8M385 282c6 0 11 3 17 3M385 282C425 282 303 342 343 342M464 279c12 0 12 21 24 21M464 291c12 0 12 9 24 9M328 366c8 0 12-2 21-2M638 351C702 351 510 265 572 265"/>
            </g>
            <g class="wire fat">
              <path d="M298 276h12M429 342C475 342 460 255 508 255M429 342C475 342 427 407 475 407M429 353h38M429 364h38M548 255h24M548 311C590 311 535 254 572 254M548 364C630 364 490 254 572 254M548 418C660 418 460 254 572 254"/>
            </g>
            <g class="wire core">
              <path d="M298 276h12M429 342C475 342 460 255 508 255M429 342C475 342 427 407 475 407M429 353h38M429 364h38M548 255h24M548 311C590 311 535 254 572 254M548 364C630 364 490 254 572 254M548 418C660 418 460 254 572 254"/>
            </g>
            <g class="ports">
              <path d="M48 242h0M48 254h0M48 265h0M127 254h0M50 279h0M127 279h0M129 291h0M142 265h0M142 276h0M142 288h0M208 276h0M219 276h0M219 288h0M219 299h0M297 276h0M297 288h0M297 299h0M311 276h0M311 288h0M384 282h0M404 285h0M462 279h0M462 291h0M345 342h0M345 353h0M427 342h0M427 353h0M350 364h0M427 364h0M297 366h0M327 366h0M467 353h0M467 364h0M467 376h0M547 364h0M475 407h0M475 418h0M475 430h0M547 418h0M490 300h0M490 311h0M490 323h0M547 311h0M509 255h0M547 255h0M573 254h0M573 265h0M573 277h0M573 288h0M573 299h0M573 311h0M573 322h0M641 261h0M641 288h0M641 314h0M638 351h0"/>
            </g>
            <g class="ports in"><path d="M48 242h0M48 254h0M48 265h0M127 254h0M50 279h0M127 279h0M129 291h0M142 265h0M142 276h0M142 288h0M208 276h0M219 276h0M219 288h0M219 299h0M297 276h0M297 288h0M297 299h0M311 276h0M311 288h0M384 282h0M404 285h0M462 279h0M462 291h0M345 342h0M345 353h0M427 342h0M427 353h0M350 364h0M427 364h0M297 366h0M327 366h0M467 353h0M467 364h0M467 376h0M547 364h0M475 407h0M475 418h0M475 430h0M547 418h0M490 300h0M490 311h0M490 323h0M547 311h0M509 255h0M547 255h0M573 254h0M573 265h0M573 277h0M573 288h0M573 299h0M573 311h0M573 322h0M641 261h0M641 288h0M641 314h0M638 351h0"/></g>
          </g>
        </svg>

        <div class="node dark n-xyz"><ul class="l"><li>X coordinate</li><li>Y coordinate</li><li>Z coordinate</li></ul><svg viewBox="0 0 14 14"><path d="M1 1l2 2m0-2L1 3M6 1l1 1 1-1M7 2v1.500M11 1h2l-2 2h2M3 5l3 4M11 5L8 9M7 5v4" class="k thin"/><circle cx="7" cy="11" r="1.500" fill="none" stroke="#222"/></svg><ul><li>Point</li></ul></div>
        <div class="node dark n-ux one"><ul class="l"><li>Factor</li></ul><svg viewBox="0 0 14 14"><path d="M4 1l5 6M9 1L4 7M1 11h11M9 9l3 2-3 2M3 9v4" class="k thick"/></svg><ul><li>Unit vector</li></ul></div>
        <div class="slider n-len"><b>長さ</b><label for="len">◇ 10</label><input id="len" type="range" min="0" max="100" value="10"></div>
        <div class="node n-line"><ul class="l"><li>Start</li><li>Direction</li><li>Length</li></ul><svg viewBox="0 0 14 14"><path d="M1 13h12M3 12L7 8M7 13l4-5" class="k thin"/><path d="M3 10l5-5-1-1 6-3-3 6-1-1-5 5z"/></svg><ul><li>Line</li></ul></div>
        <div class="node dark n-div"><ul class="l"><li>Curve</li><li>Count</li><li>Kinks</li></ul><svg viewBox="0 0 14 14"><path d="M2 12c7 1 3-9 10-10" fill="none" stroke="#b5281e" stroke-width="1.500"/><path d="M1 11h2v2H1zM5 9h2v2H5zM7 4h2v2H7zM11 1h2v2h-2z" fill="#ddd" stroke="#222" stroke-width=".6"/></svg><ul><li>Points</li><li>Tangents</li><li>Parameters</li></ul></div>
        <div class="node dark n-poly"><ul class="l"><li>Vertices</li><li>Closed</li></ul><svg viewBox="0 0 14 14"><path d="M1 3h9l2 3-8 1-2 4" fill="none" stroke="#222" stroke-width="1.500"/><path d="M8 2h3v3H8zM3 9h2v2H3z" fill="#ddd" stroke="#222" stroke-width=".6"/></svg><ul><li>Polyline</li></ul></div>
        <div class="node n-end"><ul class="l"><li>Curve</li></ul><svg viewBox="0 0 14 14"><path d="M2 12c8 1 3-9 10-10" fill="none" stroke="#a82018" stroke-width="1.500"/><circle cx="2" cy="12" r="1.300" fill="#fff" stroke="#222" stroke-width=".7"/><circle cx="12" cy="2" r="1.300" fill="#fff" stroke="#222" stroke-width=".7"/></svg><ul><li>Start</li><li>End</li></ul></div>
        <div class="node dark n-exp"><ul class="l"><li>Curve</li><li>Recursive</li></ul><svg viewBox="0 0 14 14"><path d="M3 1c5 1 3 4 3 6s3 5 6 5" fill="none" stroke="#222" stroke-width="1.800"/></svg><ul><li>Segments</li><li>Vertices</li></ul></div>
        <div class="node dark n-uz one"><ul class="l"><li>Factor</li></ul><svg viewBox="0 0 14 14"><path d="M1 13L6 2M4 4l2-2v4M8 6h5l-5 6h5" class="k thick"/></svg><ul><li>Unit vector</li></ul></div>
        <div class="note n-panel"><b>Panel</b><span>-1</span></div>
        <div class="node n-g one"><ul class="l"><li>G</li></ul><svg viewBox="0 0 14 14"><path d="M7 1c4 0 5 3 4 5S8 9 8 12L6 13c-1-3 1-5-1-6S3 1 7 1z" fill="#f5a070" stroke="#9c5028"/></svg><ul><li>G</li></ul></div>
        <div class="node n-anchor"><ul class="l"><li>Point</li><li>Target</li><li>Strength</li></ul><svg><use href="#anchor"/></svg><ul><li>A</li></ul></div>
        <div class="node n-load"><ul class="l"><li>Point</li><li>Force vector</li><li>Weighting</li></ul><svg><use href="#bulb"/></svg><ul><li>Unary</li></ul></div>
        <div class="node n-spring"><ul class="l"><li>Line</li><li>Length</li><li>Strength</li></ul><svg viewBox="0 0 14 14"><path class="bs2" d="M2 11L12 4"/><path class="k" d="M1 8l3 5M10 2l3 5"/></svg><ul><li>Spring</li></ul></div>
        <div class="node n-solver"><ul class="l"><li>GoalObjects</li><li>Reset</li><li>Threshold</li><li>Tolerance</li><li>Damping</li><li>Iterations</li><li>On</li></ul><svg viewBox="0 0 18 18"><use href="#roo" width="18" height="16"/><path d="M3 16l2-2 2 2 2-2 2 2 2-2" fill="none" stroke="#e04818" stroke-width="1.500"/></svg><ul class="wide-out"><li>I</li><li>V</li><li>O</li></ul></div>
        <div class="verdict n-conv">Converged</div>
        <div class="push-node n-btn"><span>Button</span><button aria-label="Button"></button></div>
        <div class="tag n-t1">Gools</div>
        <div class="tag n-t2">Solver</div>

        <div class="palette">
          <button aria-label="Toggle"><svg viewBox="0 0 16 16"><path d="M4 2h8v12H4z" fill="#eee" stroke="#222"/><path d="M5 3h6v5H5z" fill="#222"/></svg></button>
          <button aria-label="Button"><svg viewBox="0 0 16 16"><path d="M8 2v6M5 6l3 3 3-3M2 12h12M4 10v3M12 10v3" fill="none" stroke="#111" stroke-width="1.500"/></svg></button>
          <button aria-label="Sketch" class="y"><svg viewBox="0 0 16 16"><path d="M2 13l3-5v5l4-7-1 6 5-8-1 7" fill="none" stroke="#b0641a" stroke-width="1.500"/></svg></button>
          <button aria-label="Python" class="bare"><svg viewBox="0 0 16 16"><path d="M4 1h6v4h1v4H5v3H1V5h3z" fill="#3a78d0" stroke="#1a3a78" stroke-width=".6"/><path d="M12 5h3v6h-4v4H5v-4h5l2-2z" fill="#f59a2a" stroke="#8a4a0a" stroke-width=".6"/></svg></button>
          <button aria-label="Interpolate" class="bare"><svg viewBox="0 0 16 16"><path d="M4 6h4V3l4 5-4 5v-3H4z" fill="#dff0fb" stroke="#3a9be0"/><path class="k" d="M2 1v14M1 1h3M1 15h3M14.500 1v14"/></svg></button>
        </div>
        <svg class="compass" viewBox="0 0 32 32"><path d="M3 12C8 2 24 0 30 15" fill="none" stroke="#111" stroke-width="3"/><path d="M1 2l6 1-3 8z"/><circle cx="16" cy="18" r="13" fill="url(#knob)" stroke="#666"/><circle cx="16" cy="18" r="11.500" fill="none" stroke="#fff"/><path d="M6 10l4 0-3 4zM26 10l-4 0 3 4zM6 26l4 0-3-4zM26 26l-4 0 3-4z" fill="#fff"/></svg>
      </div>

      <footer class="gh-status"><span>_</span><span>1.0.0007</span><svg viewBox="0 0 8 8"><path d="M6 0h1v1H6zM6 3h1v1H6zM3 3h1v1H3zM6 6h1v1H6zM3 6h1v1H3zM0 6h1v1H0z" fill="#999"/></svg></footer>
    </section>
  </main>

  <footer class="taskbar">
    <button class="start" aria-label="Start"><svg viewBox="0 0 12 12"><path d="M0 2l5-1v4.700H0zM5.700.9L12 0v5.700H5.700zM0 6.400h5V11l-5-1zM5.700 6.400H12V12l-6.300-.9z" fill="#fff"/></svg></button>
    <label class="search"><svg viewBox="0 0 12 12"><circle cx="7.500" cy="4.500" r="3.500" fill="none" stroke="#222"/><path d="M5 7l-4 4" stroke="#222"/></svg><input type="text" placeholder="ここに入力して検索" aria-label="検索"></label>
    <nav class="apps">
      <button aria-label="Cortana"><svg viewBox="0 0 16 16"><circle cx="8" cy="8" r="4.600" fill="none" stroke="#fff" stroke-width="1.300"/></svg></button>
      <button aria-label="Task view"><svg viewBox="0 0 16 16"><path d="M3 3v2h7V3M3 13v-2h7v2M3 6.500h7v3H3zM12.500 3v2M12.500 7v6" fill="none" stroke="#ddd"/></svg></button>
      <button aria-label="Explorer"><svg viewBox="0 0 16 16"><path d="M1 2h5l1 1h8v11H1z" fill="#f7c948"/><path d="M1 5h14v5H1z" fill="#fddc72"/><path d="M3 14V9h10v5h-3v-2H6v2z" fill="#2f8fe0"/></svg></button>
      <button aria-label="Store"><svg viewBox="0 0 16 16"><path d="M0 4h16v11H0z" fill="#fff"/><path d="M5 4V1h6v3" fill="none" stroke="#ddd"/><path d="M4 6h3.500v3.500H4z" fill="#e5532d"/><path d="M8.500 6H12v3.500H8.500z" fill="#7ab82e"/><path d="M4 10.500h3.500V14H4z" fill="#2aa0e0"/><path d="M8.500 10.500H12V14H8.500z" fill="#f4b41e"/></svg></button>
      <button aria-label="Mail"><svg viewBox="0 0 16 16"><path d="M0 6l8-5 8 5v9H0z" fill="#1a78c8"/><path d="M1 6h14v5H1z" fill="#e8f3fc"/><path d="M0 6l8 5 8-5v9H0z" fill="#3aa8ee"/></svg></button>
      <button aria-label="Chrome" class="run"><svg viewBox="0 0 16 16"><circle cx="8" cy="8" r="7.500" fill="#3ba556"/><path d="M8 8L1.500 4.200A7.500 7.500 0 0 1 14.500 4.500H8z" fill="#e4432f"/><path d="M8 8h0l3.300 2L8 15.500A7.500 7.500 0 0 0 14.500 4.500H8z" fill="#fbcb2d"/><circle cx="8" cy="8" r="3.600" fill="#fff"/><circle cx="8" cy="8" r="2.700" fill="#3b82ea"/></svg></button>
      <button aria-label="Office"><svg viewBox="0 0 16 16"><path d="M2 4l8-4 4 1v14l-4 1-8-3 8 1V3L5 4v7l-3 1z" fill="#dc3a16"/></svg></button>
      <button aria-label="Inkscape"><svg viewBox="0 0 16 16"><path d="M8 1l7 7c0 2-4 1-3 3s-2 4-4 4-3-2-4-3-3-2-3-4z" fill="#0c0c0c" stroke="#777" stroke-width=".4"/><path d="M8 1l3 3.500-2 1-1 1-1-1-2 0z" fill="#eee"/><path d="M3 10l3 1 6-1-4 2z" fill="#bbb"/></svg></button>
      <button aria-label="GIMP"><svg viewBox="0 0 16 16"><path d="M1 5l3 2 5-1 4-2v6c-1 3-8 3-9 0z" fill="#8a8378"/><circle cx="7" cy="7" r="1.500" fill="#fff"/><circle cx="10" cy="7" r="1.500" fill="#fff"/><path d="M9 11l6 2" stroke="#d87a20"/></svg></button>
      <button aria-label="Excel"><svg viewBox="0 0 16 16"><path d="M5 1h10v14H5z" fill="#21a366"/><path d="M10 1h5v5h-5z" fill="#4ccb8a"/><path d="M5 8h10v7H5z" fill="#107c41"/><path d="M0 4h8v8H0z" fill="#0f7038"/><text x="4" y="10.500" class="appletter">X</text></svg></button>
      <button aria-label="PowerPoint"><svg viewBox="0 0 16 16"><circle cx="9" cy="8" r="7" fill="#e0552f"/><path d="M9 1a7 7 0 0 1 7 7H9z" fill="#ff9474"/><path d="M0 4h8v8H0z" fill="#c43e1c"/><text x="4" y="10.500" class="appletter">P</text></svg></button>
      <button aria-label="Word"><svg viewBox="0 0 16 16"><path d="M4 1h12v14H4z" fill="#2b7cd3"/><path d="M4 1h12v4H4z" fill="#4aa5ee"/><path d="M0 4h8v8H0z" fill="#185abd"/><text x="4" y="10.500" class="appletter">W</text></svg></button>
      <button aria-label="Kindle"><svg viewBox="0 0 16 16"><path d="M1 1h14v14H1z" fill="#2a2870"/><path d="M3 14l3-6 3 3 3-7 2 10z" fill="#8a4030"/><path d="M10 3h3v3h-3z" fill="#c8a03a"/></svg></button>
      <button aria-label="Visual Studio"><svg viewBox="0 0 16 16"><path d="M11 0l5 2v12l-5 2-6-6-3 2.500L0 11V5l2-1.500L5 6zM11 5L8 8l3 3zM2 6.500v3L3.500 8z" fill="#9256d8" fill-rule="evenodd"/></svg></button>
      <button aria-label="uLauncher"><svg viewBox="0 0 16 16"><circle cx="8" cy="8" r="7.200" fill="#143038" stroke="#26a06a" stroke-width="1.200"/><path d="M6 4L5 9c0 3 4 3 5 0l1-5" fill="none" stroke="#58d8a8" stroke-width="1.400"/></svg></button>
      <button aria-label="Blender"><svg viewBox="0 0 16 16"><path d="M0 11L8 5H3V3.500h6L7.500 2l1.500-.5 6 5c2 3 0 7-5 7.500-4 0-6-2-5-5l-3 2z" fill="#f0862a"/><circle cx="10" cy="9" r="3.200" fill="#fff"/><circle cx="10" cy="9" r="1.800" fill="#265a9a"/></svg></button>
      <button aria-label="LINE"><svg viewBox="0 0 16 16"><rect width="16" height="16" rx="2" fill="#06c11a"/><path d="M8 3c4 0 6 2 6 4.500S11 11 8 14v-2.200C4 12 2 10 2 7.500S4 3 8 3z" fill="#fff"/><path d="M4 7.500h8" stroke="#06c11a" stroke-dasharray="2 .6"/></svg></button>
      <button aria-label="Slack"><svg viewBox="0 0 16 16"><circle cx="8" cy="8" r="7.500" fill="#fff"/><g stroke-width="2" stroke-linecap="round"><path d="M6.500 3.500v3" stroke="#36c5f0"/><path d="M3.500 6.800h1" stroke="#36c5f0"/><path d="M9.500 6.500h3" stroke="#2eb67d"/><path d="M9.300 3.500v1" stroke="#2eb67d"/><path d="M9.500 9.500v3" stroke="#ecb22e"/><path d="M12 9.400h.5" stroke="#ecb22e"/><path d="M3.500 9.500h3" stroke="#e01e5a"/><path d="M6.700 12v.5" stroke="#e01e5a"/></g></svg></button>
      <button aria-label="Rhino 6" class="active"><svg viewBox="0 0 16 16"><path d="M0 0h16v16H0z" fill="#0c0c0c"/><path d="M0 1l2 3c2 2 4 1 5-1l1 4 3 0 1-3 1 4 2 1-3 5-5 2-4-3-2-4z" fill="#f5f5f5"/><path d="M4 9c2 3 5 3 8 1" fill="none" stroke="#0c0c0c"/><text x="13.500" y="6.500" class="appletter">6</text></svg></button>
    </nav>
    <div class="tray">
      <svg viewBox="0 0 10 10"><path d="M1 7l4-4 4 4"/></svg>
      <svg viewBox="0 0 12 10"><path d="M3 2h8v5H3zM5 9h5M1 1v3h3V1M2 4v5"/></svg>
      <svg viewBox="0 0 12 10"><path d="M1 4v2h1l2 2V2L2 4zM6 3c1 1 1 3 0 4M8 2c1.500 2 1.500 4 0 6M10 1c2 3 2 5 0 8"/></svg>
      <span class="ime">A</span>
      <time><span>23:12</span><span>2020/07/29</span></time>
      <svg class="note-ico" viewBox="0 0 12 12"><path d="M0 1h11v8H8l-2 2V9H0z" fill="#fff" stroke="none"/><path d="M2 3h7M2 5h7M2 7h4" stroke="#3b3631"/></svg>
    </div>
  </footer>

</body>
</html>
```
FILE: styles.css
```
* {
  box-sizing: border-box;
}
body {
  margin: 0;
  height: 100vh;
  display: flex;
  flex-direction: column;
  overflow: hidden;
  font-family: "Open Sans", "Noto Sans CJK JP", sans-serif;
  font-size: 8px;
  line-height: 10px;
  color: #1c1c1c;
}
button, input, select {
  font: inherit;
  color: inherit;
  margin: 0;
  padding: 0;
  border: none;
  background: none;
}
button {
  display: flex;
  align-items: center;
  justify-content: center;
}
ul {
  list-style: none;
  margin: 0;
  padding: 0;
}
svg {
  display: block;
  flex: none;
}
.defs {
  position: absolute;
  width: 0;
  height: 0;
}

/* icon colours */
.k { fill: none; stroke: #1b1b1b; }
.thin { stroke-width: 1; }
.thick { stroke-width: 1.6; }
.d { fill: #222; }
.o { fill: #ee8420; }
.b { fill: #2f7fe0; }
.bs { fill: none; stroke: #2f86e0; }
.bs2 { fill: none; stroke: #2f86e0; stroke-width: 1.8; }
.os { fill: none; stroke: #e87a20; }
.os2 { fill: none; stroke: #e87a20; stroke-width: 1.6; }
.ln { fill: none; stroke: #333; stroke-width: 1.3; }

.tri {
  flex: none;
  border: 2px solid transparent;
  border-top: 3px solid #222;
  border-bottom: none;
}

.desktop {
  flex: 1;
  min-height: 0;
  position: relative;
}

/* Rhino */
.rhino {
  height: 100%;
  display: flex;
  flex-direction: column;
  background: #e9ebf0;
  font-family: "Liberation Sans", "Noto Sans CJK JP", sans-serif;
  font-feature-settings: "palt";
}
.rh-title {
  height: 33px;
  padding: 1px 10px 0 0;
  display: flex;
  justify-content: flex-end;
  align-items: flex-start;
  gap: 18px;
  background: #fff;
  border-bottom: 3px solid #ececee;
}
.rh-title svg {
  width: 12px;
  height: 12px;
  fill: none;
  stroke: #888;
}
.rh-title .rh-mark {
  width: 6px;
  stroke: none;
  margin-right: auto;
}
.rh-history {
  height: 39px;
  background: #fff;
  border-bottom: 1px solid #cdd2e0;
  display: flex;
  justify-content: flex-end;
}
.mini-scroll {
  width: 10px;
  background: #f0f0f0;
  margin-right: 1px;
}
.rh-command {
  height: 15px;
  background: #fff;
  border-bottom: 2px solid #e4e6ec;
  display: flex;
}
.rh-command input {
  flex: 1;
}
.rh-command svg {
  width: 10px;
  height: 13px;
  margin-right: 1px;
}
.rh-tabs {
  height: 17px;
  padding: 3px 0 0 699px;
  display: flex;
  border-bottom: 1px solid #cdd2e4;
  font-size: 9px;
}
.rh-tabs button {
  padding: 0 7px 0 8px;
  background: #dcdcdc;
  border-right: 1px solid #cdd2e4;
  clip-path: polygon(6px 0, 100% 0, 100% 100%, 0 100%);
}
.rh-tabs .cut {
  padding: 0 12px 0 0;
}
.rh-tabs .gear {
  margin-left: auto;
  width: 10px;
  height: 10px;
  margin-right: 1px;
}
.rh-tools {
  height: 39px;
}
.rh-body {
  flex: 1;
  min-height: 0;
  display: flex;
}
.rh-side {
  width: 6px;
  height: 180px;
}
.viewport {
  flex: 1;
  margin: 0 5px 10px 0;
  background: #9da2aa;
  border-bottom: 1px solid #b5b9c0;
}
.knots {
  fill: none;
  stroke: #98090c;
  stroke-width: 2.2;
}
.rh-gap {
  height: 20px;
  border-bottom: 1px solid #ccd2e4;
}
.rh-status {
  height: 13px;
  padding-left: 710px;
  display: flex;
  align-items: center;
  gap: 3px;
}
.rh-status span + span {
  font-family: Lato, "Noto Sans CJK JP", sans-serif;
}

/* render panel */
.panel {
  width: 201px;
  margin-top: 2px;
  display: flex;
  flex-direction: column;
  background: #f6f6f7;
  border-left: 1px solid #cdd3e2;
  border-bottom: 1px solid #cdd3e2;
  border-top: 2px solid #d5dae6;
}
.panel-tabs {
  height: 15px;
  padding-right: 1px;
  display: flex;
  align-items: stretch;
  background: #e9ebf0;
}
.panel-tabs button {
  width: 27px;
  padding-right: 8px;
  background: #dcdcdc;
  clip-path: polygon(0 0, 70% 0, 100% 100%, 0 100%);
}
.panel-tabs .on {
  background: #f6f6f7;
}
.panel-tabs svg {
  width: 12px;
  height: 11px;
}
.panel-tabs .gear {
  width: 10px;
  margin: 2px 0 0 auto;
}
.panel-scroll {
  flex: 1;
  min-height: 0;
  display: flex;
  overflow: hidden;
}
.props {
  flex: 1;
  min-width: 0;
  padding: 1px 4px 0 16px;
}
.props h3 {
  margin: 0 0 4px -7px;
  height: 16px;
  display: flex;
  align-items: center;
  gap: 4px;
  font-size: 10px;
  font-weight: normal;
  line-height: 14px;
}
.props h3::before {
  content: "";
  flex: none;
  width: 4px;
  height: 4px;
  margin-bottom: 3px;
  border: solid #333;
  border-width: 0 1px 1px 0;
  transform: rotate(45deg);
}
.props h3::after {
  content: "";
  flex: 1;
  border-top: 1px solid #c8c8c8;
}
.props h3.up { margin-top: 6px; }
.props h3.up2 { margin: 10px 0 1px -7px; }
.props h3.up3 { margin-top: 7px; }
.row {
  height: 16px;
  display: flex;
  align-items: center;
  gap: 2px;
  white-space: nowrap;
}
.row.short { height: 13px; }
.row.gap { margin-top: 1px; }
.row.far { margin-top: 9px; }
.row.mid-row { height: 14px; margin: 5px 0; }
.row.mid-row.tight { margin-bottom: 0; }
.row.mid-row.flush { margin-top: 3px; }
.in0 { margin-left: -2px; }
.in1 { margin-left: 2px; }
.in2 { margin-left: 11px; }
.dim, .dim2 { color: #858585; }
.dim2 { color: #444; margin-right: 5px; }
.push { margin-left: auto; }
.pick {
  position: relative;
  height: 14px;
  display: flex;
}
.pick.wide { width: 160px; height: 15px; }
.pick.mid { width: 87px; margin-left: 4px; }
.pick.grow { flex: 1; margin-left: 2px; }
.pick select {
  appearance: none;
  width: 100%;
  padding: 0 2px;
  background: #e3e3e3;
  border: 1px solid #b4b4b4;
  border-radius: 0;
}
.pick .icon-pad {
  padding-left: 14px;
}
.pick > svg {
  position: absolute;
  left: 2px;
  top: 2px;
  width: 11px;
  height: 11px;
}
.pick::after {
  content: "";
  position: absolute;
  right: 4px;
  top: 4px;
  width: 4px;
  height: 4px;
  border: solid #555;
  border-width: 0 1px 1px 0;
  transform: rotate(45deg);
}
.num {
  width: 26px;
  height: 12px;
  padding-left: 4px;
  background: #fff;
  border: 1px solid #ccc;
}
.num.off {
  background: #f3f3f3;
  color: #8a8a8a;
}
.num.dpi { margin-left: 2px; }
.spin {
  width: 8px;
  height: 12px;
  margin-left: -3px;
  border: 1px solid #c4c4c4;
  background: linear-gradient(#f2f2f2 5px, #c4c4c4 5px, #c4c4c4 6px, #f2f2f2 6px);
}
.spin.wide-end { margin-right: 6px; }
.spin::before, .spin::after {
  content: "";
  display: block;
  margin: 1px 1px 3px;
  border: 2px solid transparent;
  border-top: none;
  border-bottom: 2px solid #555;
}
.spin::after {
  border-bottom: none;
  border-top: 2px solid #555;
}
.row input[type="checkbox"], .row input[type="radio"] {
  appearance: none;
  flex: none;
  width: 9px;
  height: 9px;
  background: #fff;
  border: 1px solid #444;
  display: flex;
  align-items: center;
  justify-content: center;
}
.row input[type="radio"] { border-radius: 50%; }
.row input[type="radio"]:checked::before {
  content: "";
  width: 5px;
  height: 5px;
  border-radius: 50%;
  background: #222;
}
.row input[type="checkbox"]:checked::before {
  content: "";
  width: 3px;
  height: 5px;
  margin-bottom: 2px;
  border: solid #222;
  border-width: 0 1px 1px 0;
  transform: rotate(45deg);
}
.row input:disabled { border-color: #c8c8c8; }
.swatch {
  width: 82px;
  height: 12px;
  margin: 0 2px 0 auto;
  background: #fff;
  border: 1px solid #8a8a8a;
}
.row .tri { margin-right: 6px; }
.studio {
  width: 147px;
  height: 19px;
  margin: 2px 0 0 16px;
  padding: 1px 4px 1px 1px;
  gap: 2px;
  justify-content: flex-start;
  background: #dfdfdf;
  border: 1px solid #b9b9b9;
  font-family: "DejaVu Sans", sans-serif;
}
.studio .dr {
  width: 38px;
  height: 15px;
  background: linear-gradient(90deg, #cfcfcf, #dcdcdc);
}
.studio .pn {
  width: 12px;
  height: 12px;
  margin: 0 3px 0 auto;
  fill: #2fae35;
}
.studio:disabled { color: #8a8a8a; }
.studio:disabled .pn { fill: #999; filter: grayscale(1); }
.studio:disabled .tri { opacity: .3; }
.set {
  width: 92px;
  height: 14px;
  margin: 0 3px 0 auto;
  background: #e1e1e1;
  border: 1px solid #b4b4b4;
}
.set svg { width: 13px; height: 12px; }
.set span { flex: 1; }
.light {
  width: 56px;
  height: 14px;
  background: #e1e1e1;
  border: 1px solid #b4b4b4;
}
.light svg { width: 11px; height: 11px; }
.light span { flex: 1; }
.black {
  width: 16px;
  height: 11px;
  background: #000;
}
.scrollbar {
  width: 12px;
  background: #f0f0f0;
  display: flex;
  flex-direction: column;
  align-items: center;
}
.scrollbar svg { width: 9px; height: 10px; }
.scrollbar i {
  width: 10px;
  height: 262px;
  background: #cdcdcd;
  margin-bottom: auto;
}
.panel-foot {
  height: 20px;
  padding: 2px 4px 2px 18px;
  display: flex;
  gap: 5px;
  background: #efefef;
}
.panel-foot button {
  background: #e1e1e1;
  border: 1px solid #b4b4b4;
  gap: 1px;
}
.panel-foot svg { width: 17px; height: 14px; }
.panel-foot span { flex: 1; white-space: nowrap; }
.reset { width: 105px; }
.render { flex: 1; }

/* Grasshopper window */
.gh {
  position: absolute;
  left: 5px;
  top: 0;
  bottom: 0;
  width: 700px;
  display: flex;
  flex-direction: column;
  background: #f0f0f0;
  border: 1px solid #8a8a8a;
  border-top-color: #5a5a5a;
  box-shadow: 0 0 12px rgba(0, 0, 0, .35);
}
.gh-title, .gh-menu, .gh-tabs {
  font-family: Lato, "Open Sans", sans-serif;
}
.gh-title {
  height: 20px;
  padding: 0 10px 0 5px;
  display: flex;
  align-items: center;
  gap: 20px;
  background: #fff;
}
.gh-title span { margin-right: auto; }
.gh-title svg {
  width: 10px;
  height: 10px;
  fill: none;
  stroke: #222;
}
.gh-menu {
  height: 18px;
  padding: 0 6px 0 8px;
  display: flex;
  align-items: center;
  gap: 12px;
  background: #f7f7f7;
}
.gh-menu a {
  color: inherit;
  text-decoration: none;
}
.gh-menu span { margin-left: auto; }
.gh-tabs {
  height: 15px;
  padding-left: 1px;
  display: flex;
  align-items: stretch;
  color: #5c5c5c;
}
.gh-tabs button { padding: 0 5px; }
.gh-tabs .on {
  background: #fafafa;
  border: 1px solid #b5b5b5;
  border-bottom: none;
  border-radius: 4px 4px 0 0;
  color: #111;
}
.ribbon {
  height: 57px;
  padding: 1px 5px 7px 1px;
  display: flex;
  justify-content: space-between;
  background: #e6e6e6;
  border-top: 1px solid #bdbdbd;
  border-bottom: 1px solid #777;
}
.grp {
  display: flex;
  flex-direction: column;
  background: linear-gradient(#d2d2d2, #e8e8e8);
  border: 1px solid #8e8e8e;
  border-radius: 3px;
  overflow: hidden;
}
.c4 { width: 79px; }
.c3 { width: 60px; }
.c2 { width: 41px; }
.icons {
  flex: 1;
  display: flex;
  flex-wrap: wrap;
  align-content: flex-start;
  padding-left: 1px;
}
.icons svg {
  width: 17px;
  height: 17px;
  margin: 1px;
}
.grp b {
  height: 9px;
  padding-right: 6px;
  background: linear-gradient(#3a3a3a, #111);
  color: #fff;
  font-family: "DejaVu Sans", sans-serif;
  font-size: 6px;
  font-weight: normal;
  line-height: 8px;
  text-align: center;
  white-space: nowrap;
  position: relative;
}
.grp b::after {
  content: "+";
  position: absolute;
  right: 2px;
  top: 1px;
  color: #ccc;
}
.gh-tools {
  height: 22px;
  padding: 0 3px;
  display: flex;
  align-items: center;
  gap: 4px;
  background: linear-gradient(#fff, #efefef);
}
.gh-tools svg {
  width: 15px;
  height: 15px;
}
.gh-tools .on {
  width: 18px;
  height: 18px;
  background: #e3f1fb;
  border: 1px solid #4da3e0;
}
.sep {
  width: 1px;
  height: 14px;
  background: #c8c8c8;
}
.pick.zoom { width: 90px; height: 15px; }
.pick.zoom select { background: #fff; border-color: #777; }
.fill { flex: 1; }
.gh-status {
  height: 16px;
  padding: 0 0 0 4px;
  display: flex;
  align-items: center;
  background: #f2f2f2;
  border-top: 1px solid #fff;
  color: #888;
  font-family: Lato, sans-serif;
}
.gh-status span + span { margin-left: auto; }
.gh-status svg {
  width: 8px;
  height: 8px;
  margin: 4px 1px 0 11px;
}

/* canvas */
.canvas {
  flex: 1;
  min-height: 0;
  position: relative;
  overflow: hidden;
  background: #d4d0c8;
  color: #111;
  font-size: 6px;
  line-height: 11px;
}
.wires { position: absolute; }
.g-green { fill: #66ea60; fill-opacity: .88; stroke: #55b84e; stroke-width: .5; }
.g-blue { fill: #98a7cc; fill-opacity: .92; stroke: #6c83a3; stroke-dasharray: 1 1; }
.wire { fill: none; stroke: #2c4f2c; stroke-width: 1.4; }
.wire.fat { stroke-width: 2.6; }
.wire.core { stroke: #86a98f; stroke-width: .8; }
.ports { fill: none; stroke: #111; stroke-width: 5; stroke-linecap: round; }
.ports.in { stroke: #fff; stroke-width: 3; }
.node {
  position: absolute;
  padding: 1px 4px;
  display: flex;
  align-items: center;
  justify-content: space-between;
  border: 1px solid #4c4c4c;
  border-radius: 2px;
  background: linear-gradient(#fff, #e9e9e9 15%, #c4c4c4);
  box-shadow: 0 1px 1px rgba(0, 0, 0, .35);
  white-space: nowrap;
}
.node.dark { background: linear-gradient(#d6d6dc, #a9a9b5 15%, #83838f); }
.node .l { text-align: right; }
.node svg { width: 14px; height: 14px; }
.node.one { padding-top: 0; padding-bottom: 0; }
.node.one svg { height: 11px; }
.n-xyz { left: 42px; top: 103px; width: 79px; height: 37px; }
.n-ux { left: 44px; top: 140px; width: 77px; height: 12px; }
.n-len { left: 37px; top: 152px; width: 86px; height: 11px; }
.n-line { left: 136px; top: 125px; width: 66px; height: 37px; }
.n-div { left: 213px; top: 136px; width: 78px; height: 37px; }
.n-poly { left: 305px; top: 136px; width: 73px; height: 26px; }
.n-end { left: 398px; top: 139px; width: 58px; height: 26px; }
.n-exp { left: 339px; top: 202px; width: 82px; height: 26px; }
.n-uz { left: 344px; top: 225px; width: 77px; height: 14px; }
.n-panel { left: 291px; top: 222px; width: 30px; height: 22px; }
.n-g { left: 503px; top: 114px; width: 38px; height: 15px; }
.n-anchor { left: 484px; top: 160px; width: 57px; height: 37px; }
.n-load { left: 461px; top: 213px; width: 80px; height: 37px; }
.n-spring { left: 469px; top: 267px; width: 72px; height: 37px; }
.n-solver { left: 567px; top: 114px; width: 68px; height: 82px; }
.n-conv { left: 571px; top: 196px; width: 60px; height: 9px; }
.n-btn { left: 572px; top: 212px; width: 60px; height: 13px; }
.n-t1 { left: 490px; top: 95px; }
.n-t2 { left: 588px; top: 95px; }
.wide-out {
  display: flex;
  flex-direction: column;
  gap: 16px;
}
.slider {
  position: absolute;
  display: flex;
  align-items: center;
  border: 1px solid #4c4c4c;
  border-radius: 2px;
  background: linear-gradient(#f4f4f4, #cfcfcf);
  line-height: 9px;
}
.slider b {
  width: 18px;
  margin-right: 3px;
  background: #8e8e9a;
  border-right: 1px solid #4c4c4c;
  font-weight: normal;
  text-align: center;
}
.slider input {
  appearance: none;
  flex: 1;
  min-width: 0;
  height: 1px;
  margin: 0 4px;
  background: repeating-linear-gradient(90deg, #999 0 1px, transparent 1px 6px);
}
.slider input::-webkit-slider-thumb {
  appearance: none;
  width: 0;
}
.note {
  position: absolute;
  border: 1px solid #55501c;
  border-radius: 2px;
  background: #fcf552;
  text-align: center;
  line-height: 9px;
  box-shadow: 0 1px 1px rgba(0, 0, 0, .35);
}
.note b {
  display: block;
  height: 10px;
  background: #cdbf36;
  border-bottom: 1px dashed #55501c;
  font-weight: normal;
}
.note span { display: block; }
.verdict {
  position: absolute;
  background: #2b2b2b;
  color: #eee;
  text-align: center;
  line-height: 8px;
  border-radius: 0 0 2px 2px;
}
.push-node {
  position: absolute;
  display: flex;
  border: 1px solid #444;
  border-radius: 2px;
  background: linear-gradient(#c6c6ce, #8e8e9a);
}
.push-node span { width: 31px; text-align: center; }
.push-node button {
  flex: 1;
  border-left: 1px solid #222;
  background: linear-gradient(#999, #444 50%, #777);
}
.tag {
  position: absolute;
  padding: 0 2px;
  background: #fff;
  border: 1px solid #555;
  border-radius: 1px;
  line-height: 8px;
}
.tag::after {
  content: "";
  position: absolute;
  left: 50%;
  top: 100%;
  margin-left: -2px;
  border: 2px solid transparent;
  border-top: 2px solid #444;
  border-bottom: none;
}
.palette {
  position: absolute;
  left: 0;
  bottom: 0;
  padding: 0 2px 0 0;
  display: flex;
  gap: 1px;
  border: 1px solid #555;
  background: linear-gradient(90deg, #bbb, #e4e4e4 80%, #888);
}
.palette button {
  width: 18px;
  height: 17px;
  background: linear-gradient(#ddd, #888);
  border: 1px solid #555;
  border-radius: 2px;
}
.palette .y { background: #fbc93a; }
.palette .bare { background: none; border-color: transparent; }
.palette svg { width: 15px; height: 15px; }
.compass {
  position: absolute;
  right: 20px;
  bottom: 8px;
  width: 34px;
  height: 34px;
}

/* taskbar */
.taskbar {
  height: 27px;
  display: flex;
  background: #3b3631;
  color: #fff;
}
.start { width: 32px; }
.start svg { width: 12px; height: 12px; }
.search {
  width: 229px;
  padding-left: 7px;
  display: flex;
  align-items: center;
  gap: 7px;
  background: #f2f2f2;
  border-bottom: 1px solid #999;
}
.search svg { width: 12px; height: 12px; }
.search input {
  flex: 1;
  font-family: "Noto Sans CJK JP", sans-serif;
  font-size: 9px;
  font-feature-settings: "palt";
}
.search input::placeholder { color: #444; }
.apps {
  width: 621px;
  display: flex;
}
.apps button {
  flex: 1;
  border-bottom: 2px solid transparent;
}
.apps svg { width: 16px; height: 16px; }
.apps .run { border-color: #76b9ed; }
.apps .active { background: #6b6763; border-color: #76b9ed; }
.appletter {
  font: bold 7px "Open Sans", sans-serif;
  fill: #fff;
  text-anchor: middle;
}
.tray {
  margin-left: auto;
  padding-right: 16px;
  display: flex;
  align-items: center;
  gap: 6px;
}
.tray svg {
  width: 11px;
  height: 11px;
  fill: none;
  stroke: #fff;
}
.tray .ime { font-size: 11px; }
.tray time {
  display: flex;
  flex-direction: column;
  align-items: center;
  font-size: 7px;
  line-height: 12px;
}
.tray .note-ico {
  width: 12px;
  height: 12px;
  margin-left: 5px;
}
```
